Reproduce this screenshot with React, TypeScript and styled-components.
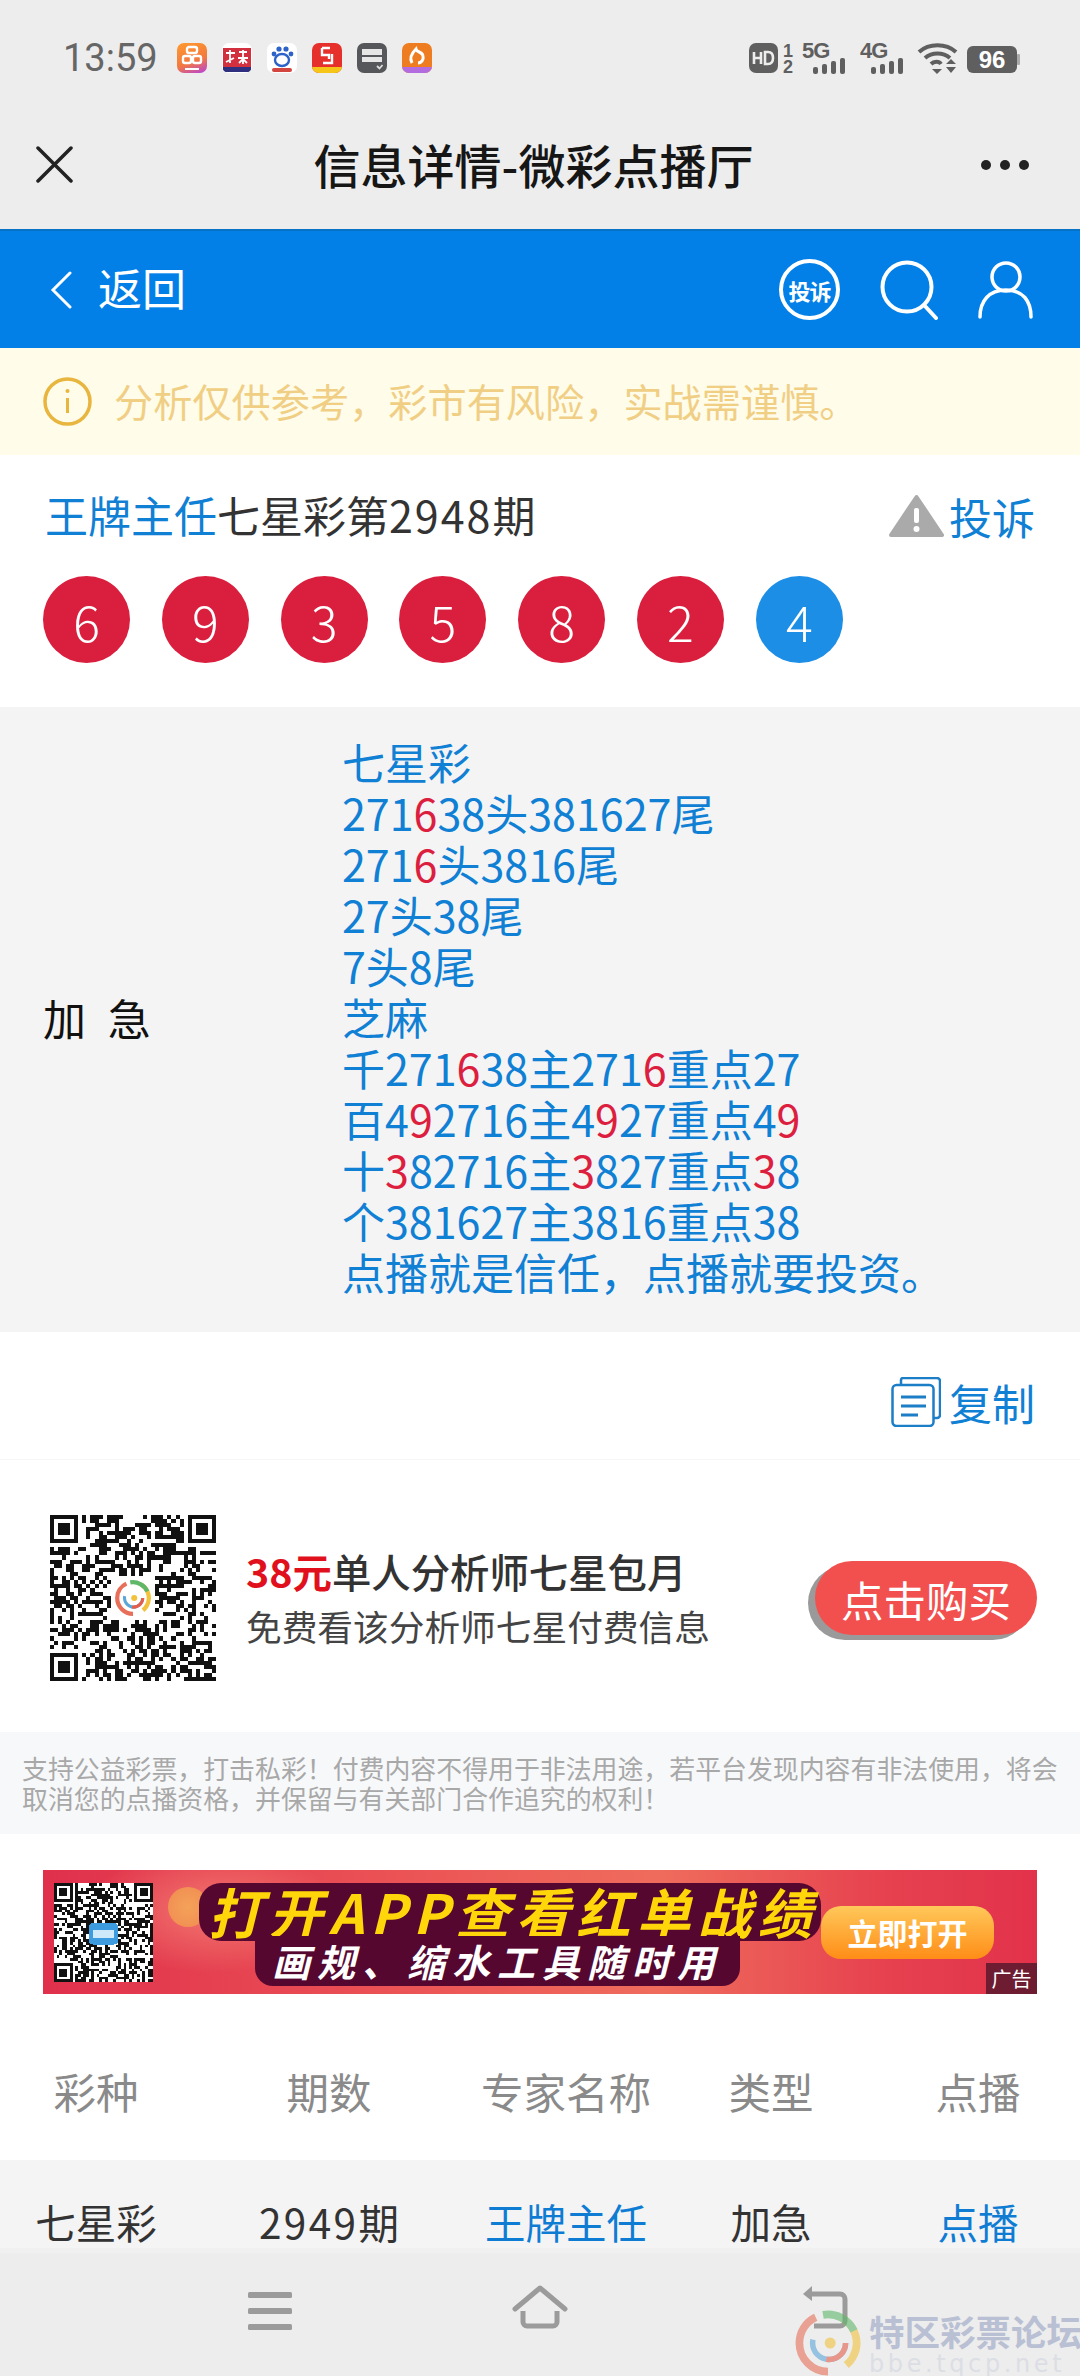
import React, {FC, ReactNode} from 'react';
import styled, {createGlobalStyle} from 'styled-components';

const GlobalStyle = createGlobalStyle`
  html, body {
    margin: 0;
    padding: 0;
    background: #ededed;
  }
  * {
    box-sizing: border-box;
  }
`;

const Page = styled.div`
  width: 1080px;
  height: 2376px;
  display: flex;
  flex-direction: column;
  overflow: hidden;
  position: relative;
  font-family: "Noto Sans CJK SC", "Liberation Sans", sans-serif;
  background: #fff;
`;

const StatusBar = styled.div`
  height: 100px;
  flex: none;
  display: flex;
  align-items: flex-start;
  padding: 43px 60px 0 63px;
  background: #ededed;
`;

const Time = styled.div`
  width: 114px;
  height: 30px;
  line-height: 30px;
  font-family: Roboto, "Liberation Sans", sans-serif;
  font-size: 38px;
  color: #666;
`;

const AppIcons = styled.div`
  display: flex;
  gap: 15px;
`;

const AppIcon = styled.div<{$bg: string}>`
  width: 30px;
  height: 30px;
  border-radius: 7px;
  overflow: hidden;
  background: ${p => p.$bg};
  svg {
    display: block;
  }
`;

const StatusRight = styled.div`
  margin-left: auto;
  display: flex;
  align-items: flex-start;
  color: #5f5f5f;
`;

const TitleBar = styled.div`
  height: 129px;
  flex: none;
  display: grid;
  grid-template-columns: 37px 1fr 50px;
  align-items: center;
  padding: 0 50px 0 36px;
  background: #ededed;
`;

const Title = styled.div`
  padding: 0 0 3px 14px;
  text-align: center;
  font-size: 47px;
  font-weight: 500;
  color: #161616;
`;

const BlueBar = styled.div`
  height: 119px;
  flex: none;
  display: flex;
  align-items: center;
  padding: 0 47px 0 50px;
  background: #0280e8;
  border-top: 2px solid #0873c4;
  color: #fff;
`;

const BackText = styled.div`
  margin-left: 26px;
  padding-bottom: 5px;
  font-size: 44px;
`;

const BarIcons = styled.div`
  margin-left: auto;
  display: flex;
  align-items: center;
`;

const ComplainBadge = styled.div`
  width: 61px;
  height: 61px;
  border: 4px solid #fff;
  border-radius: 50%;
  display: flex;
  align-items: center;
  justify-content: center;
  font-size: 22px;
  font-weight: 700;
  letter-spacing: -1px;
  white-space: nowrap;
  margin-right: 40px;
`;

const Notice = styled.div`
  height: 107px;
  flex: none;
  display: flex;
  align-items: center;
  padding: 0 0 0 43px;
  background: #fffcea;
  font-size: 39.2px;
  color: #f0cf85;
`;

const NoticeText = styled.div`
  margin-left: 22px;
  padding-bottom: 4px;
`;

const InfoSection = styled.div`
  height: 252px;
  flex: none;
  padding: 36px 45px 0 43px;
  background: #fff;
`;

const InfoTop = styled.div`
  height: 50px;
  display: flex;
  align-items: center;
  padding-left: 2px;
  font-size: 43px;
  color: #333;
`;

const InfoName = styled.div`
  padding-bottom: 4px;
`;

const WideDigits = styled.span<{$gap: number}>`
  letter-spacing: ${p => p.$gap}px;
`;

const Blue = styled.span`
  color: #1080d4;
`;

const Red = styled.span`
  color: #dd1f3f;
`;

const Complain = styled.div`
  margin-left: auto;
  display: flex;
  align-items: center;
  gap: 5px;
  color: #1080d4;
`;

const Balls = styled.div`
  margin-top: 35px;
  display: flex;
  gap: 31.8px;
`;

const Ball = styled.div<{$blue?: boolean}>`
  width: 87px;
  height: 87px;
  border-radius: 50%;
  display: flex;
  align-items: center;
  justify-content: center;
  font-size: 50px;
  font-weight: 300;
  color: #fff;
  background: ${p => (p.$blue ? '#1c8ee6' : '#d91f3d')};
`;

const DetailSection = styled.div`
  height: 625px;
  flex: none;
  display: flex;
  align-items: center;
  padding-bottom: 6px;
  background: #f4f4f4;
`;

const DetailLabel = styled.div`
  width: 342px;
  padding: 0 0 0 43px;
  font-size: 43px;
  word-spacing: 12px;
  color: #111;
`;

const DetailLines = styled.div`
  font-size: 43px;
  line-height: 51px;
  color: #1080d4;
`;

const CopyRow = styled.div`
  height: 128px;
  flex: none;
  display: flex;
  align-items: center;
  justify-content: flex-end;
  gap: 8px;
  padding: 12px 45px 0 0;
  font-size: 43px;
  color: #1080d4;
  border-bottom: 1px solid #f6f6f6;
`;

const BuySection = styled.div`
  height: 272px;
  flex: none;
  display: flex;
  align-items: center;
  padding: 4px 43px 0 50px;
`;

const BuyText = styled.div`
  margin-left: 30px;
  display: flex;
  flex-direction: column;
  gap: 7px;
`;

const BuyHead = styled.div`
  font-size: 39.4px;
  line-height: 48px;
  font-weight: 500;
  color: #333;
`;

const Price = styled.span`
  color: #e0101c;
  font-weight: 700;
`;

const BuySub = styled.div`
  font-size: 35.7px;
  line-height: 48px;
  color: #444;
`;

const BuyButton = styled.div`
  margin-left: auto;
  width: 222px;
  height: 74px;
  border-radius: 37px;
  display: flex;
  align-items: center;
  justify-content: center;
  background: #f2504f;
  box-shadow: -7px 5px 0 #9a9a9a;
  font-size: 42.5px;
  color: #fff;
`;

const Disclaimer = styled.div`
  height: 102px;
  flex: none;
  padding: 21px 20px 0 22px;
  background: #f7f8fa;
  font-size: 25.9px;
  line-height: 30px;
  color: #a8a8a8;
`;

const AdWrap = styled.div`
  height: 190px;
  flex: none;
  padding: 36px 43px 0 43px;
`;

const AdBanner = styled.div`
  position: relative;
  height: 124px;
  display: flex;
  align-items: center;
  padding-left: 11px;
  overflow: hidden;
  background:
    radial-gradient(ellipse 180px 90px at 170px 40px, rgba(255, 170, 140, 0.5), transparent 70%),
    linear-gradient(90deg, #e0304c 0%, #ec5756 40%, #ef6c5c 62%, #e6414f 85%, #e2324b 100%);
`;

const AdQr = styled.div`
  width: 99px;
  height: 99px;
  flex: none;
  background: #fff;
`;

const AdCoin = styled.div`
  position: absolute;
  left: 125px;
  top: 17px;
  width: 40px;
  height: 40px;
  border-radius: 50%;
  background: radial-gradient(circle, #f4a25a, #f08a50);
`;

const AdCopy = styled.div`
  position: relative;
  width: 622px;
  height: 124px;
  margin-left: 46px;
  padding-top: 13px;
  flex: none;
  display: flex;
  flex-direction: column;
  font-weight: 700;
  font-style: italic;
  white-space: nowrap;
`;

const AdHead = styled.div`
  height: 58px;
  line-height: 56px;
  border-radius: 22px;
  padding-left: 9px;
  background: #55072f;
  font-size: 54px;
  letter-spacing: 6.500px;
  color: #ffd60a;
`;

const AdSub = styled.div`
  align-self: flex-start;
  margin: -5px 0 0 56px;
  height: 50px;
  line-height: 50px;
  padding: 0 18px 0 17px;
  border-radius: 0 0 18px 18px;
  background: #55072f;
  font-size: 38px;
  letter-spacing: 7px;
  color: #fff;
`;

const AdOpen = styled.div`
  width: 173px;
  height: 53px;
  flex: none;
  border-radius: 20px;
  display: flex;
  align-items: center;
  justify-content: center;
  background: linear-gradient(180deg, #ffc85a, #ff8d17);
  font-size: 30px;
  font-weight: 700;
  color: #fff;
`;

const AdTag = styled.div`
  position: absolute;
  right: 0;
  bottom: 0;
  width: 51px;
  height: 31px;
  display: flex;
  align-items: center;
  justify-content: center;
  background: rgba(70, 20, 40, 0.75);
  font-size: 20px;
  color: #fff;
`;

const TableGrid = styled.div<{$head?: boolean}>`
  height: ${p => (p.$head ? 136 : 126)}px;
  flex: none;
  display: grid;
  grid-template-columns: 192px 274px 200px 210px 204px;
  align-items: center;
  padding-bottom: 3px;
  text-align: center;
  font-size: ${p => (p.$head ? 42.5 : 40.5)}px;
  color: ${p => (p.$head ? '#8a8a8a' : '#333')};
  background: ${p => (p.$head ? '#fff' : '#f4f4f4')};
`;

const Cell = styled.div<{$link?: boolean}>`
  color: ${p => (p.$link ? '#0f7cd4' : 'inherit')};
`;

const NavBar = styled.div`
  position: absolute;
  left: 0;
  right: 0;
  bottom: 0;
  height: 128px;
  background: #ededed;
  border-top: 5px solid #f0f0f0;
  display: flex;
  align-items: flex-start;
  padding: 39px 0 0 248px;
`;

const Watermark = styled.div`
  position: absolute;
  left: 795px;
  bottom: 0;
  height: 66px;
  display: flex;
  gap: 8px;
`;

const MarkText = styled.div`
  display: flex;
  flex-direction: column;
  width: 216px;
  white-space: nowrap;
`;

const MarkName = styled.div`
  font-size: 35.5px;
  line-height: 42px;
  font-weight: 700;
  color: #b9c0d4;
`;

const MarkUrl = styled.div`
  font-family: "DejaVu Sans", sans-serif;
  font-size: 24px;
  line-height: 24px;
  letter-spacing: 3.6px;
  color: #dcdee5;
`;

// seeded noise, the codes only have to look like QR codes
const qrPath = (count: number, seed: number): string => {
  let state = seed;
  const next = () => {
    state = (state * 1103515245 + 12345) & 0x7fffffff;
    return (state >> 16) & 1;
  };
  const inFinder = (x: number, y: number) =>
    (x < 8 && y < 8) || (x >= count - 8 && y < 8) || (x < 8 && y >= count - 8);
  let d = '';
  for (let y = 0; y < count; y++) {
    for (let x = 0; x < count; x++) {
      if (!inFinder(x, y) && next()) d += `M${x} ${y}h1v1h-1z`;
    }
  }
  [[0, 0], [count - 7, 0], [0, count - 7]].forEach(([x, y]) => {
    d += `M${x} ${y}h7v7h-7zM${x + 1} ${y + 1}v5h5v-5zM${x + 2} ${y + 2}h3v3h-3z`;
  });
  return d;
};

const QrCode: FC<{size: number; count: number; seed: number; children?: ReactNode}> = ({size, count, seed, children}) => (
  <svg width={size} height={size} viewBox={`0 0 ${count} ${count}`} shapeRendering="crispEdges" style={{flex: 'none', display: 'block'}}>
    <path d={qrPath(count, seed)} fill="#111" fillRule="evenodd" />
    {children}
  </svg>
);

const Swirl: FC<{size: number; x?: number; y?: number; opacity?: number}> = ({size, x, y, opacity = 1}) => (
  <svg x={x} y={y} width={size} height={size} viewBox="0 0 60 60" fill="none" opacity={opacity} shapeRendering="geometricPrecision">
    <circle cx="30" cy="30" r="26" stroke="#e8705a" strokeWidth="7" strokeDasharray="70 100" transform="rotate(90 30 30)" />
    <circle cx="30" cy="30" r="26" stroke="#f2c23c" strokeWidth="7" strokeDasharray="50 120" transform="rotate(-60 30 30)" />
    <circle cx="30" cy="30" r="26" stroke="#5fb86a" strokeWidth="7" strokeDasharray="34 140" transform="rotate(260 30 30)" />
    <circle cx="31" cy="30" r="15" stroke="#5aa7d8" strokeWidth="5" strokeDasharray="50 60" />
    <circle cx="31" cy="30" r="15" stroke="#e85d4a" strokeWidth="5" strokeDasharray="26 100" />
    <circle cx="32" cy="30" r="5" fill="#f2c23c" />
  </svg>
);

const Signal: FC = () => (
  <svg width="35" height="16" viewBox="0 0 35 16" fill="currentColor">
    <rect x="1" y="9" width="5" height="7" rx="2" />
    <rect x="10" y="6" width="5" height="10" rx="2" />
    <rect x="19" y="3" width="5" height="13" rx="2" />
    <rect x="28" y="0" width="5" height="16" rx="2" />
  </svg>
);

const TinyLabel = styled.div<{$width: number; $left: number}>`
  width: ${p => p.$width}px;
  margin-left: ${p => p.$left}px;
  display: flex;
  flex-direction: column;
  font-family: "Liberation Sans", sans-serif;
  font-weight: 700;
`;

const NetLabel = styled.div`
  height: 15px;
  font-size: 22px;
  line-height: 15px;
  letter-spacing: -1px;
`;

const NetBars = styled.div`
  margin: 0 0 0 10px;
`;

const DualSim = styled.div`
  width: 14px;
  margin-left: 3px;
  font-family: "Liberation Sans", sans-serif;
  font-size: 18px;
  font-weight: 700;
  line-height: 16px;
  text-align: center;
`;

const App: FC = () => {
  return (
    <Page>
      <GlobalStyle />
      <StatusBar>
        <Time>13:59</Time>
        <AppIcons>
          <AppIcon $bg="linear-gradient(160deg,#ff9a2e,#f2793f 60%,#b63fe0)">
            <svg width="30" height="30" viewBox="0 0 30 30" fill="none" stroke="#fff" strokeWidth="2.4">
              <rect x="10" y="4" width="10" height="6" rx="2" />
              <rect x="6" y="13" width="8" height="7" rx="2" />
              <rect x="16" y="13" width="8" height="7" rx="2" />
              <rect x="8" y="25" width="14" height="2" fill="#fff" stroke="none" />
            </svg>
          </AppIcon>
          <AppIcon $bg="#fff">
            <svg width="30" height="30" viewBox="0 0 30 30">
              <rect x="1" y="5" width="28" height="19" fill="#d3303f" />
              <rect x="1" y="24" width="28" height="5" fill="#2e2f7f" />
              <path d="M4 10h9M8 7v13M4 19l8-4M17 9h8M21 7v14M16 15h10M17 20l4-4 4 4" stroke="#fff" strokeWidth="1.8" fill="none" />
            </svg>
          </AppIcon>
          <AppIcon $bg="#fff">
            <svg width="30" height="30" viewBox="0 0 30 30">
              <circle cx="7" cy="11" r="2.4" fill="#2d62c8" />
              <circle cx="12" cy="6" r="2.6" fill="#2d62c8" />
              <circle cx="19" cy="6" r="2.6" fill="#2d62c8" />
              <circle cx="24" cy="11" r="2.4" fill="#2d62c8" />
              <ellipse cx="15" cy="17" rx="7" ry="6" fill="none" stroke="#2d62c8" strokeWidth="2.4" />
              <rect x="5" y="25" width="20" height="4" rx="2" fill="#d3453f" />
            </svg>
          </AppIcon>
          <AppIcon $bg="#e5302c">
            <svg width="30" height="30" viewBox="0 0 30 30" fill="none">
              <path d="M10 5h8M10 5v7h7v4M20 11v9h-9" stroke="#fff" strokeWidth="2.4" />
              <rect x="0" y="24" width="30" height="6" fill="#f5c518" />
            </svg>
          </AppIcon>
          <AppIcon $bg="#55575a">
            <svg width="30" height="30" viewBox="0 0 30 30" fill="none">
              <rect x="5" y="6" width="20" height="6" fill="#e6e6e6" />
              <rect x="5" y="14" width="20" height="5" fill="#e6e6e6" />
              <path d="M20 23l2.500 2.500 3-3.500" stroke="#ddd" strokeWidth="1.800" />
            </svg>
          </AppIcon>
          <AppIcon $bg="#ee7d22">
            <svg width="30" height="30" viewBox="0 0 30 30" fill="none">
              <path d="M10 20c-3-5 0-10 4-14 1 4 6 2 7 7 1 4-2 7-5 7" stroke="#fff" strokeWidth="3" />
              <rect x="0" y="24" width="30" height="6" fill="#b26ce0" />
            </svg>
          </AppIcon>
        </AppIcons>
        <StatusRight>
          <svg width="29" height="30" viewBox="0 0 29 30">
            <rect width="29" height="30" rx="7" fill="#5f5f5f" />
            <path d="M5 9v12M12 9v12M5 15h7M16 9v12h3c3 0 5-2 5-6s-2-6-5-6z" stroke="#ededed" strokeWidth="2.600" fill="none" />
          </svg>
          <DualSim>1<br />2</DualSim>
          <TinyLabel $width={45} $left={7}>
            <NetLabel>5G</NetLabel>
            <NetBars><Signal /></NetBars>
          </TinyLabel>
          <TinyLabel $width={45} $left={13}>
            <NetLabel>4G</NetLabel>
            <NetBars><Signal /></NetBars>
          </TinyLabel>
          <svg width="41" height="31" viewBox="0 0 41 31" fill="none" stroke="currentColor" strokeWidth="4" style={{marginLeft: 12}}>
            <path d="M2 9c10-9 27-9 37 0" />
            <path d="M8 15c7-6 18-6 25 0" />
            <path d="M14 21c3-3 8-3 10 0" />
            <path d="M15 26l5 5 5-5z" fill="currentColor" stroke="none" />
            <path d="M29 21l5-5 5 5zM29 24h10l-5 6z" fill="currentColor" stroke="none" />
          </svg>
          <svg width="53" height="31" viewBox="0 0 53 31" style={{marginLeft: 9}}>
            <rect x="0" y="3" width="50" height="27" rx="6" fill="#5f5f5f" />
            <rect x="50" y="11" width="3" height="11" rx="1" fill="#aaa" />
            <text x="25" y="25" textAnchor="middle" fill="#fff" fontFamily="Liberation Sans" fontWeight="700" fontSize="24">96</text>
          </svg>
        </StatusRight>
      </StatusBar>

      <TitleBar>
        <svg width="37" height="37" viewBox="0 0 37 37" stroke="#222" strokeWidth="3.500" strokeLinecap="round">
          <path d="M2 2l33 33M35 2L2 35" />
        </svg>
        <Title>信息详情-微彩点播厅</Title>
        <svg width="50" height="12" viewBox="0 0 50 12" fill="#222">
          <circle cx="6" cy="6" r="5" />
          <circle cx="25" cy="6" r="5" />
          <circle cx="44" cy="6" r="5" />
        </svg>
      </TitleBar>

      <BlueBar>
        <svg width="22" height="38" viewBox="0 0 22 38" fill="none" stroke="#fff" strokeWidth="3" strokeLinecap="round">
          <path d="M20 2L3 19l17 17" />
        </svg>
        <BackText>返回</BackText>
        <BarIcons>
          <ComplainBadge>投诉</ComplainBadge>
          <svg width="58" height="60" viewBox="0 0 58 60" fill="none" stroke="#fff" strokeWidth="4" strokeLinecap="round" style={{marginRight: 40}}>
            <circle cx="27" cy="27" r="24.500" />
            <path d="M44 45l12 13" />
          </svg>
          <svg width="55" height="58" viewBox="0 0 55 58" fill="none" stroke="#fff" strokeWidth="3.500" strokeLinecap="round">
            <circle cx="28" cy="16" r="14" />
            <path d="M2 56c0-16 9-27 26-27s25 11 25 27" />
          </svg>
        </BarIcons>
      </BlueBar>

      <Notice>
        <svg width="49" height="49" viewBox="0 0 49 49" fill="none" stroke="#e8b53f" strokeWidth="3.500">
          <circle cx="24.500" cy="24.500" r="22.500" />
          <path d="M24.500 21v15" strokeWidth="3" />
          <circle cx="24.500" cy="14" r="2" fill="#e8b53f" stroke="none" />
        </svg>
        <NoticeText>分析仅供参考，彩市有风险，实战需谨慎。</NoticeText>
      </Notice>

      <InfoSection>
        <InfoTop>
          <InfoName>
            <Blue>王牌主任</Blue>七星彩第<WideDigits $gap={2}>2948</WideDigits>期
          </InfoName>
          <Complain>
            <svg width="55" height="44" viewBox="0 0 55 44">
              <path d="M27.500 3L53 41H2z" fill="#aaa" stroke="#aaa" strokeWidth="4" strokeLinejoin="round" />
              <rect x="25" y="14" width="5" height="15" rx="2" fill="#fff" />
              <circle cx="27.500" cy="35" r="3" fill="#fff" />
            </svg>
            投诉
          </Complain>
        </InfoTop>
        <Balls>
          {[6, 9, 3, 5, 8, 2].map((n, i) => (
            <Ball key={i}>{n}</Ball>
          ))}
          <Ball $blue>4</Ball>
        </Balls>
      </InfoSection>

      <DetailSection>
        <DetailLabel>加 急</DetailLabel>
        <DetailLines>
          <div>七星彩</div>
          <div>271<Red>6</Red>38头381627尾</div>
          <div>271<Red>6</Red>头3816尾</div>
          <div>27头38尾</div>
          <div>7头8尾</div>
          <div>芝麻</div>
          <div>千271<Red>6</Red>38主271<Red>6</Red>重点27</div>
          <div>百4<Red>9</Red>2716主4<Red>9</Red>27重点4<Red>9</Red></div>
          <div>十<Red>3</Red>82716主<Red>3</Red>827重点<Red>3</Red>8</div>
          <div>个381627主3816重点38</div>
          <div>点播就是信任，点播就要投资。</div>
        </DetailLines>
      </DetailSection>

      <CopyRow>
        <svg width="50" height="50" viewBox="0 0 50 50" fill="none" stroke="#1c7ec6" strokeWidth="2.500">
          <path d="M10 7V3a2 2 0 0 1 2-2h34a3 3 0 0 1 3 3v34a3 3 0 0 1-3 3h-3" />
          <rect x="1.500" y="8" width="41" height="41" rx="4" />
          <path d="M10 20h25M10 29h25M10 38h17" strokeWidth="3" />
        </svg>
        复制
      </CopyRow>

      <BuySection>
        <QrCode size={166} count={41} seed={2948}>
          <rect x="15" y="15" width="11" height="11" fill="#fff" />
          <Swirl x={16} y={16} size={9} />
        </QrCode>
        <BuyText>
          <BuyHead><Price>38元</Price>单人分析师七星包月</BuyHead>
          <BuySub>免费看该分析师七星付费信息</BuySub>
        </BuyText>
        <BuyButton>点击购买</BuyButton>
      </BuySection>

      <Disclaimer>
        支持公益彩票，打击私彩！付费内容不得用于非法用途，若平台发现内容有非法使用，将会取消您的点播资格，并保留与有关部门合作追究的权利！
      </Disclaimer>

      <AdWrap>
        <AdBanner>
          <AdQr>
            <QrCode size={99} count={37} seed={77}>
              <rect x="13" y="15" width="11" height="8" rx="1.500" fill="#3d9be0" />
              <rect x="14.500" y="17.500" width="8" height="3" fill="#cfe8fa" />
            </QrCode>
          </AdQr>
          <AdCoin />
          <AdCopy>
            <AdHead>打开APP查看红单战绩</AdHead>
            <AdSub>画规、缩水工具随时用</AdSub>
          </AdCopy>
          <AdOpen>立即打开</AdOpen>
          <AdTag>广告</AdTag>
        </AdBanner>
      </AdWrap>

      <TableGrid $head>
        <Cell>彩种</Cell>
        <Cell>期数</Cell>
        <Cell>专家名称</Cell>
        <Cell>类型</Cell>
        <Cell>点播</Cell>
      </TableGrid>
      <TableGrid>
        <Cell>七星彩</Cell>
        <Cell><WideDigits $gap={2.4}>2949</WideDigits>期</Cell>
        <Cell $link>王牌主任</Cell>
        <Cell>加急</Cell>
        <Cell $link>点播</Cell>
      </TableGrid>

      <NavBar>
        <svg width="44" height="38" viewBox="0 0 44 38" fill="#9b9b9b">
          <rect y="0" width="44" height="6" rx="1.500" />
          <rect y="16" width="44" height="6" rx="1.500" />
          <rect y="32" width="44" height="6" rx="1.500" />
        </svg>
        <svg width="56" height="44" viewBox="0 0 56 44" fill="none" stroke="#9b9b9b" strokeWidth="5" strokeLinejoin="round" style={{marginLeft: 220, marginTop: -7}}>
          <path d="M3 24L28 3l25 21" strokeLinecap="round" />
          <path d="M11 26v11a4 4 0 0 0 4 4h26a4 4 0 0 0 4-4V26" />
        </svg>
        <svg width="46" height="44" viewBox="0 0 46 44" fill="none" stroke="#9b9b9b" strokeWidth="5" style={{marginLeft: 234, marginTop: -7}}>
          <path d="M8 9h30a5 5 0 0 1 5 5v22a5 5 0 0 1-5 5H12" />
          <path d="M1 9l9-8v15z" fill="#9b9b9b" stroke="none" />
        </svg>
        <Watermark>
          <Swirl size={66} opacity={0.6} />
          <MarkText>
            <MarkName>特区彩票论坛</MarkName>
            <MarkUrl>bbe.tqcp.net</MarkUrl>
          </MarkText>
        </Watermark>
      </NavBar>
    </Page>
  );
};

export default App;
